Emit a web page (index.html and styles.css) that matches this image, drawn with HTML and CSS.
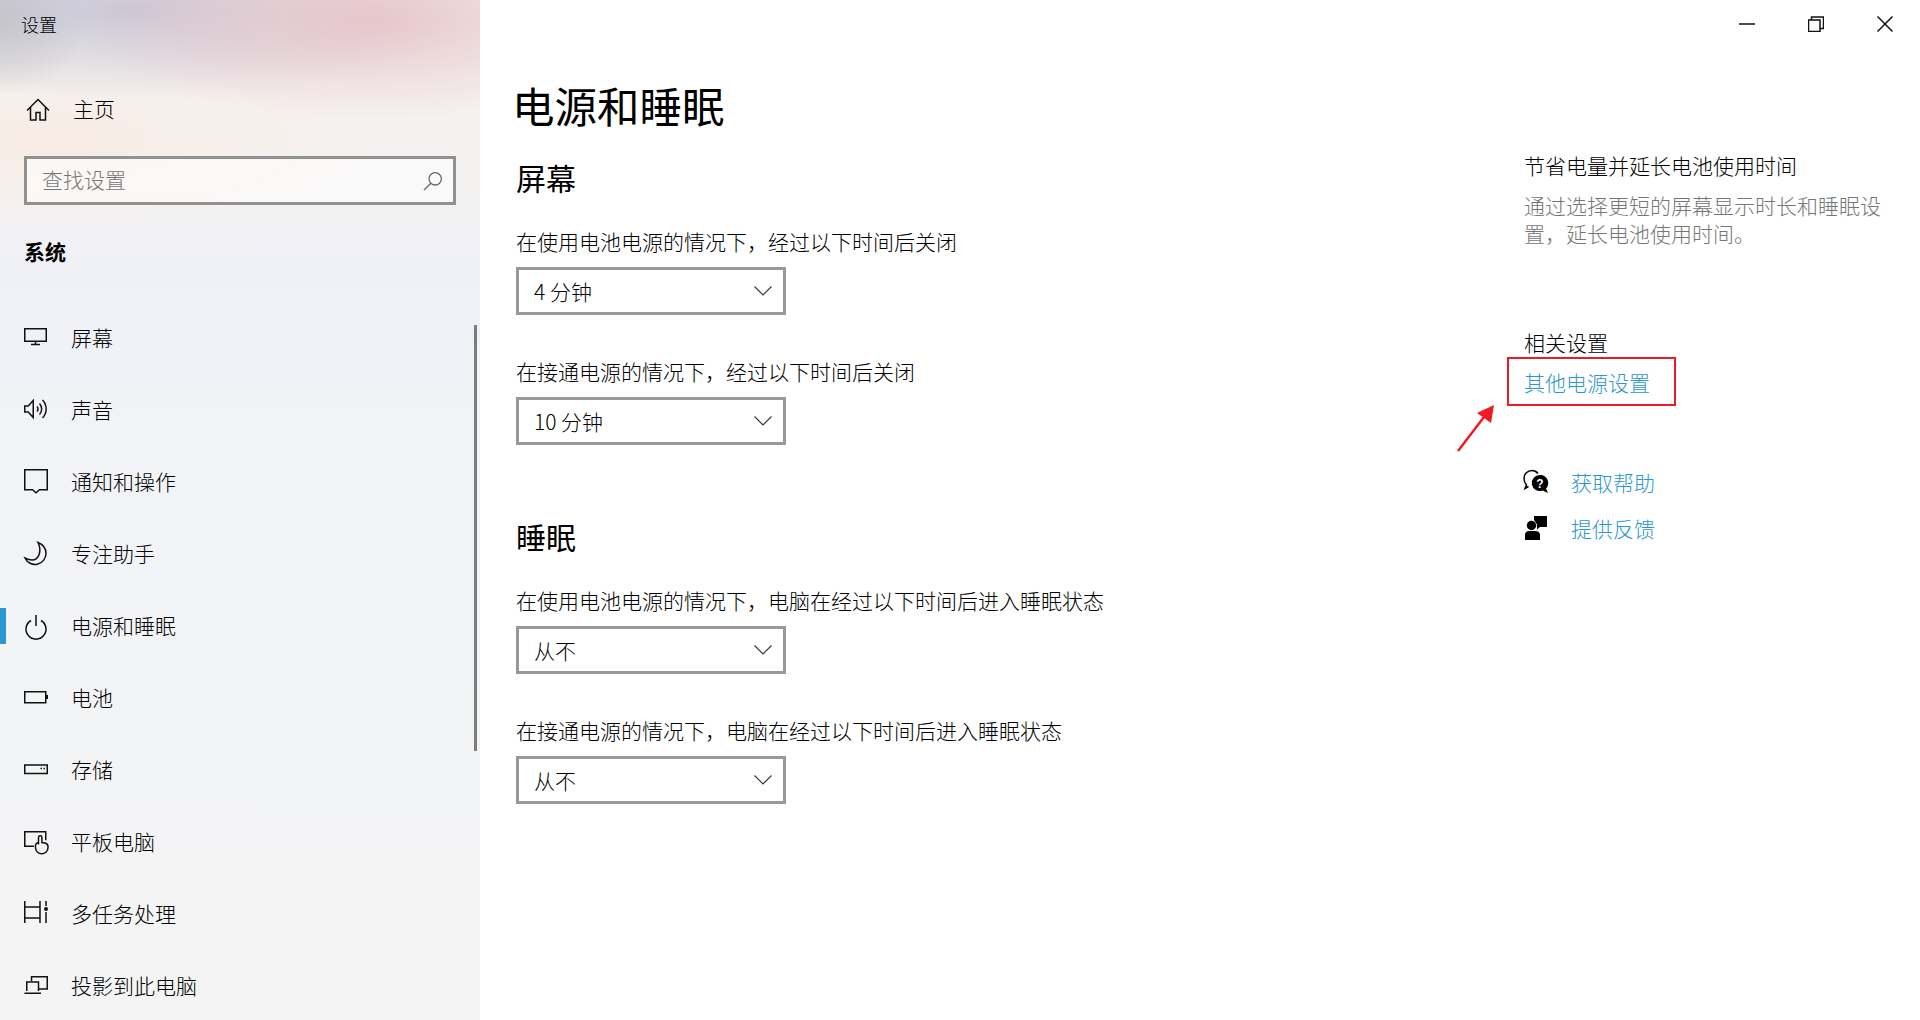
FILE: index.html
```html
<!DOCTYPE html>
<html lang="zh-CN">
<head>
    <meta charset="UTF-8">
    <meta name="viewport" content="width=device-width, initial-scale=1.0">
    <title>设置</title>
    <link rel="stylesheet" href="styles.css">
</head>
<body>
    <div class="window">
        <!-- Sidebar -->
        <aside class="sidebar">
            <div class="app-title">设置</div>

            <a class="home-link">
                <svg class="nav-icon" viewBox="0 0 24 24"><path d="M1 12.500 12 1.500l11 11M4.500 9.500V22h5.500v-7.500h4V22h5.500V9.500"/></svg>
                <span>主页</span>
            </a>

            <div class="search-box">
                <span class="search-text">查找设置</span>
                <svg class="search-icon" viewBox="0 0 20 20"><circle cx="12.200" cy="7.800" r="6.200"/><path d="M7.800 12.200 1 19"/></svg>
            </div>

            <div class="group-title">系统</div>

            <nav class="nav-list">
                <a class="nav-item">
                    <svg class="nav-icon" viewBox="0 0 24 24"><path d="M.75 2.750h21.500v12.500H.75zM11.500 15.500v3M7 18.500h9"/></svg>
                    <span>屏幕</span>
                </a>
                <a class="nav-item">
                    <svg class="nav-icon" viewBox="0 0 24 24"><path d="M.75 8h3.500l5-5.500v17l-5-5.500H.75zM13 8.500a3.500 3.500 0 0 1 0 5M15.500 5.500a8 8 0 0 1 0 11M18.500 2a13 13 0 0 1 0 18"/></svg>
                    <span>声音</span>
                </a>
                <a class="nav-item">
                    <svg class="nav-icon" viewBox="0 0 24 24"><path d="M.75-.25h22.500v20H15.500l-3.500 3-3.500-3H.75z"/></svg>
                    <span>通知和操作</span>
                </a>
                <a class="nav-item">
                    <svg class="nav-icon" viewBox="0 0 24 24"><path d="M14 .5c5 2 8 6 8 11a11 11 0 0 1-21 4.500c3 1.500 5 2 7 2 7 0 10-9 6-17.500z"/></svg>
                    <span>专注助手</span>
                </a>
                <a class="nav-item active">
                    <svg class="nav-icon" viewBox="0 0 24 24"><path d="M7 6.500a10 10 0 1 0 10 0M12 1v11"/></svg>
                    <span>电源和睡眠</span>
                </a>
                <a class="nav-item">
                    <svg class="nav-icon" viewBox="0 0 24 24"><path d="M.75 5.750h21v11h-21z"/><path class="fill" d="M22 9h2v4h-2z"/></svg>
                    <span>电池</span>
                </a>
                <a class="nav-item">
                    <svg class="nav-icon" viewBox="0 0 24 24"><path d="M.75 7h22.500v8.500H.75zM16.500 10.500h1.500M19.500 10.500H21"/></svg>
                    <span>存储</span>
                </a>
                <a class="nav-item">
                    <svg class="nav-icon" viewBox="0 0 24 24"><path d="M10 16.250H.75V1.750h21v8.500M14.500 14.500V7.500a1.700 1.700 0 0 1 3.400 0v5l3 .5c2 .5 3.100 1.500 3.100 3.500v1a6.250 6.250 0 0 1-12.500 0v-2c0-1.500 1-2.500 3-3"/></svg>
                    <span>平板电脑</span>
                </a>
                <a class="nav-item">
                    <svg class="nav-icon" viewBox="0 0 24 24"><path d="M.75-1v22M16-1v22M.75 5h15.250M.75 16h15.250M22-1v5M22 10v11"/><circle class="fill" cx="22" cy="7" r="2"/></svg>
                    <span>多任务处理</span>
                </a>
                <a class="nav-item">
                    <svg class="nav-icon" viewBox="0 0 24 24"><path d="M7.500 7V2.750h15.750V15H15M2.750 17V8h11.750v9M.5 19.250h16.500"/></svg>
                    <span>投影到此电脑</span>
                </a>
            </nav>

            <div class="sidebar-scroll"></div>
        </aside>

        <!-- Main panel -->
        <main class="panel">
            <div class="window-controls">
                <div class="win-btn">
                    <svg viewBox="0 0 16 16"><path d="M0 8h16"/></svg>
                </div>
                <div class="win-btn">
                    <svg viewBox="0 0 16 16"><path d="M.5 4h11.500v11.500H.5zM3.500 4V1h12v11.500H12"/></svg>
                </div>
                <div class="win-btn">
                    <svg viewBox="0 0 16 16"><path d="M.5.5l15 15M15.500.5l-15 15"/></svg>
                </div>
            </div>

            <div class="panel-body">
                <div class="settings-col">
                    <h1 class="page-title">电源和睡眠</h1>

                    <section class="block block-screen">
                        <h2>屏幕</h2>
                        <div class="field">
                            <div class="field-label">在使用电池电源的情况下，经过以下时间后关闭</div>
                            <div class="dropdown">
                                <span>4 分钟</span>
                                <svg class="chevron" viewBox="0 0 18 10"><path d="M.5.5 9 9l8.500-8.500"/></svg>
                            </div>
                        </div>
                        <div class="field">
                            <div class="field-label">在接通电源的情况下，经过以下时间后关闭</div>
                            <div class="dropdown">
                                <span>10 分钟</span>
                                <svg class="chevron" viewBox="0 0 18 10"><path d="M.5.5 9 9l8.500-8.500"/></svg>
                            </div>
                        </div>
                    </section>

                    <section class="block block-sleep">
                        <h2>睡眠</h2>
                        <div class="field">
                            <div class="field-label">在使用电池电源的情况下，电脑在经过以下时间后进入睡眠状态</div>
                            <div class="dropdown">
                                <span>从不</span>
                                <svg class="chevron" viewBox="0 0 18 10"><path d="M.5.5 9 9l8.500-8.500"/></svg>
                            </div>
                        </div>
                        <div class="field">
                            <div class="field-label">在接通电源的情况下，电脑在经过以下时间后进入睡眠状态</div>
                            <div class="dropdown">
                                <span>从不</span>
                                <svg class="chevron" viewBox="0 0 18 10"><path d="M.5.5 9 9l8.500-8.500"/></svg>
                            </div>
                        </div>
                    </section>
                </div>

                <div class="side-col">
                    <div class="side-heading">节省电量并延长电池使用时间</div>
                    <p class="side-text">通过选择更短的屏幕显示时长和睡眠设置，延长电池使用时间。</p>

                    <div class="side-heading related">相关设置</div>
                    <a class="power-link">
                        其他电源设置
                        <svg class="red-arrow" viewBox="0 0 42 50"><path class="shaft" d="M3 48 29 14"/><path class="head" d="M39 2 22 10 36 20z"/></svg>
                    </a>

                    <a class="help-row first">
                        <svg class="help-icon" viewBox="0 0 24 24">
                            <path class="outline" d="M4.500 14.500 1 16.500l1.500-3.500C.5 11 0 9 0 6.500 0 2 3.500-1.500 8-1.500c2.500 0 4.500 1 6 3"/>
                            <path d="M16 3a8 8 0 0 1 6 13.500l2 4.500-5.500-2.500A8 8 0 1 1 16 3z"/>
                            <text x="16" y="15.500" class="qmark">?</text>
                        </svg>
                        <span>获取帮助</span>
                    </a>
                    <a class="help-row">
                        <svg class="help-icon" viewBox="0 0 24 24">
                            <path d="M10-2H23V9H16L13 11.500V6.500L10 2z"/>
                            <circle cx="7.500" cy="7.500" r="4.700"/>
                            <path d="M1 22v-5c0-2.500 1.500-4 4-4h6c3 0 5 1.500 5 4v5z"/>
                        </svg>
                        <span>提供反馈</span>
                    </a>
                </div>
            </div>
        </main>
    </div>
</body>
</html>
```

FILE: styles.css
```css
/* Reset */
*, *::before, *::after {
    margin: 0;
    padding: 0;
    box-sizing: border-box;
}

body {
    width: 1920px;
    height: 1020px;
    overflow: hidden;
    background: #ffffff;
    color: #000000;
    font-family: "Noto Sans CJK SC", "Liberation Sans", sans-serif;
    font-size: 21px;
    font-weight: 300;
}

.window {
    display: grid;
    grid-template-columns: 480px 1fr;
    height: 100%;
}

svg path, svg circle {
    fill: none;
    stroke: #111111;
    stroke-width: 1.5;
}

svg .fill {
    fill: #111111;
    stroke: none;
}

/* Sidebar */
.sidebar {
    position: relative;
    height: 1020px;
    overflow: hidden;
    background:
        radial-gradient(ellipse 300px 100px at 370px 20px, rgba(230, 195, 200, 0.9), rgba(230, 195, 200, 0) 100%),
        radial-gradient(ellipse 340px 90px at 130px 10px, rgba(192, 192, 210, 0.85), rgba(192, 192, 210, 0) 100%),
        radial-gradient(ellipse 90px 80px at 0 15px, rgba(190, 190, 185, 0.8), rgba(190, 190, 185, 0) 100%),
        radial-gradient(ellipse 320px 90px at 60px 140px, rgba(248, 236, 228, 0.9), rgba(248, 236, 228, 0) 100%),
        linear-gradient(180deg, #f6f1ef 0, #f4f2f1 190px, #f0f1f7 260px, #f2f3f7 420px, #f3f4f6 700px, #f4f4f4 1020px);
}

.app-title {
    height: 50px;
    padding-left: 21px;
    font-size: 18px;
    line-height: 48px;
}

.home-link,
.nav-item {
    display: flex;
    align-items: center;
    gap: 23px;
    height: 72px;
    padding-left: 24px;
}

.nav-item span {
    margin-bottom: 2px;
}

.home-link {
    margin-top: 24px;
    padding-left: 26px;
    gap: 23px;
}

.home-link span {
    margin-bottom: 4px;
}

.nav-icon {
    width: 24px;
    height: 24px;
    flex: none;
    overflow: visible;
}

.search-box {
    display: flex;
    align-items: center;
    justify-content: space-between;
    width: 432px;
    height: 49px;
    margin: 10px 0 0 24px;
    padding: 0 10px 0 15px;
    border: 3px solid #919191;
    background: rgba(255, 255, 255, 0.55);
}

.search-text {
    margin-bottom: 4px;
    color: #767676;
}

.search-icon {
    width: 20px;
    height: 20px;
}

.search-icon circle,
.search-icon path {
    stroke: #666666;
    stroke-width: 1.3;
}

.group-title {
    height: 40px;
    margin: 27px 0 0 24px;
    font-weight: 700;
    line-height: 38px;
}

.nav-list {
    margin-top: 30px;
}

.nav-item {
    position: relative;
}

.nav-item.active::before {
    content: "";
    position: absolute;
    left: 0;
    top: 18px;
    width: 6px;
    height: 36px;
    background: #2b97d3;
}

.sidebar-scroll {
    position: absolute;
    left: 474px;
    top: 325px;
    width: 3px;
    height: 426px;
    background: #7c7c7c;
}

/* Main panel */
.panel {
    display: flex;
    flex-direction: column;
    min-width: 0;
}

.window-controls {
    display: flex;
    justify-content: flex-end;
    height: 48px;
    padding-right: 1px;
}

.win-btn {
    display: flex;
    align-items: center;
    justify-content: center;
    width: 69px;
}

.win-btn svg {
    width: 16px;
    height: 16px;
}

.panel-body {
    display: flex;
    justify-content: space-between;
    padding-left: 36px;
}

.settings-col {
    width: 800px;
}

.page-title {
    height: 60px;
    margin: 29px 0 0 -4px;
    font-size: 42.5px;
    font-weight: 400;
    line-height: 56px;
}

.block h2 {
    height: 40px;
    font-size: 30px;
    font-weight: 400;
    line-height: 34px;
}

.block-screen {
    margin-top: 23px;
}

.block-sleep {
    margin-top: 73px;
}

.block-sleep h2 {
    line-height: 36px;
}

.field {
    margin-top: 43px;
}

.block h2 + .field {
    margin-top: 28px;
}

.block-sleep h2 + .field {
    margin-top: 29px;
}

.field-label {
    height: 30px;
    line-height: 26px;
}

.dropdown {
    display: flex;
    align-items: center;
    justify-content: space-between;
    width: 270px;
    height: 48px;
    margin-top: 9px;
    padding: 0 11px 0 15px;
    border: 3px solid #999999;
    background: #ffffff;
}

.dropdown span {
    margin-bottom: 1px;
}

.chevron {
    width: 18px;
    height: 10px;
}

.chevron path {
    stroke: #333333;
    stroke-width: 1.1;
}

.side-col {
    width: 396px;
    padding-right: 36px;
}

.side-heading {
    height: 30px;
    margin-top: 104px;
    line-height: 26px;
}

.side-text {
    margin-top: 9px;
    color: #767676;
    line-height: 28px;
}

.side-heading.related {
    margin-top: 81px;
    line-height: 28px;
}

.power-link {
    position: relative;
    display: block;
    height: 30px;
    margin-top: 10px;
    color: #2b96d1;
    line-height: 28px;
}

/* Annotation drawn over the link */
.power-link::after {
    content: "";
    position: absolute;
    left: -17px;
    top: -11px;
    width: 169px;
    height: 49px;
    border: 2px solid #ed1c24;
}

.red-arrow {
    position: absolute;
    left: -69px;
    top: 35px;
    width: 42px;
    height: 50px;
}

.red-arrow .shaft {
    stroke: #ed1c24;
    stroke-width: 2.5;
}

.red-arrow .head {
    fill: #ed1c24;
    stroke: none;
}

.help-row {
    display: flex;
    align-items: center;
    gap: 23px;
    height: 36px;
    margin-top: 10px;
    color: #2b96d1;
}

.help-row span {
    margin-bottom: 4px;
}

.help-row.first {
    margin-top: 68px;
}

.help-icon {
    width: 24px;
    height: 24px;
    overflow: visible;
}

.help-icon path,
.help-icon circle {
    fill: #000000;
    stroke: none;
}

.help-icon .outline {
    fill: none;
    stroke: #000000;
    stroke-width: 1.5;
}

.qmark {
    fill: #ffffff;
    font-family: "Liberation Sans", sans-serif;
    font-size: 12px;
    font-weight: 700;
    text-anchor: middle;
}
```
